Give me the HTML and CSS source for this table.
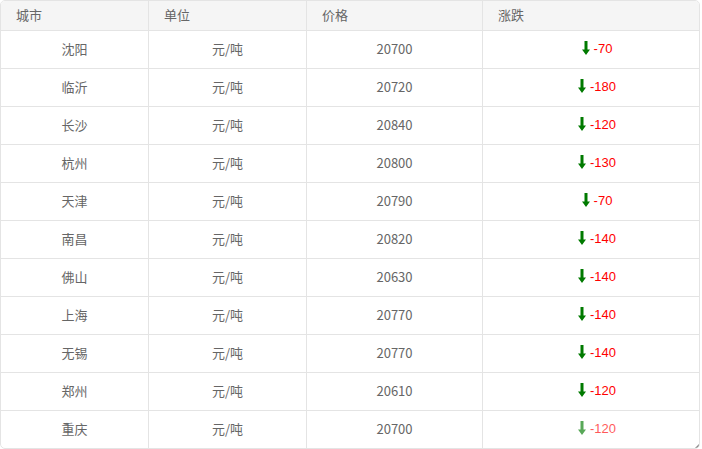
FILE: index.html
```html
<!DOCTYPE html>
<html lang="zh-CN">
<head>
<meta charset="utf-8">
<title>价格表</title>
<link rel="stylesheet" href="styles.css">
</head>
<body>
<div class="table">
  <div class="row head">
    <div class="cell">城市</div>
    <div class="cell">单位</div>
    <div class="cell">价格</div>
    <div class="cell">涨跌</div>
  </div>
  <div class="row"><div class="cell">沈阳</div><div class="cell">元/吨</div><div class="cell">20700</div><div class="cell chgcell"><span class="chg"><svg class="arrow" viewBox="0 0 8 14"><path d="M2.5 0h3v8.5h2.5l-4 5.5-4-5.5h2.5z"/></svg><span class="num">-70</span></span></div></div>
  <div class="row"><div class="cell">临沂</div><div class="cell">元/吨</div><div class="cell">20720</div><div class="cell chgcell"><span class="chg"><svg class="arrow" viewBox="0 0 8 14"><path d="M2.5 0h3v8.5h2.5l-4 5.5-4-5.5h2.5z"/></svg><span class="num">-180</span></span></div></div>
  <div class="row"><div class="cell">长沙</div><div class="cell">元/吨</div><div class="cell">20840</div><div class="cell chgcell"><span class="chg"><svg class="arrow" viewBox="0 0 8 14"><path d="M2.5 0h3v8.5h2.5l-4 5.5-4-5.5h2.5z"/></svg><span class="num">-120</span></span></div></div>
  <div class="row"><div class="cell">杭州</div><div class="cell">元/吨</div><div class="cell">20800</div><div class="cell chgcell"><span class="chg"><svg class="arrow" viewBox="0 0 8 14"><path d="M2.5 0h3v8.5h2.5l-4 5.5-4-5.5h2.5z"/></svg><span class="num">-130</span></span></div></div>
  <div class="row"><div class="cell">天津</div><div class="cell">元/吨</div><div class="cell">20790</div><div class="cell chgcell"><span class="chg"><svg class="arrow" viewBox="0 0 8 14"><path d="M2.5 0h3v8.5h2.5l-4 5.5-4-5.5h2.5z"/></svg><span class="num">-70</span></span></div></div>
  <div class="row"><div class="cell">南昌</div><div class="cell">元/吨</div><div class="cell">20820</div><div class="cell chgcell"><span class="chg"><svg class="arrow" viewBox="0 0 8 14"><path d="M2.5 0h3v8.5h2.5l-4 5.5-4-5.5h2.5z"/></svg><span class="num">-140</span></span></div></div>
  <div class="row"><div class="cell">佛山</div><div class="cell">元/吨</div><div class="cell">20630</div><div class="cell chgcell"><span class="chg"><svg class="arrow" viewBox="0 0 8 14"><path d="M2.5 0h3v8.5h2.5l-4 5.5-4-5.5h2.5z"/></svg><span class="num">-140</span></span></div></div>
  <div class="row"><div class="cell">上海</div><div class="cell">元/吨</div><div class="cell">20770</div><div class="cell chgcell"><span class="chg"><svg class="arrow" viewBox="0 0 8 14"><path d="M2.5 0h3v8.5h2.5l-4 5.5-4-5.5h2.5z"/></svg><span class="num">-140</span></span></div></div>
  <div class="row"><div class="cell">无锡</div><div class="cell">元/吨</div><div class="cell">20770</div><div class="cell chgcell"><span class="chg"><svg class="arrow" viewBox="0 0 8 14"><path d="M2.5 0h3v8.5h2.5l-4 5.5-4-5.5h2.5z"/></svg><span class="num">-140</span></span></div></div>
  <div class="row"><div class="cell">郑州</div><div class="cell">元/吨</div><div class="cell">20610</div><div class="cell chgcell"><span class="chg"><svg class="arrow" viewBox="0 0 8 14"><path d="M2.5 0h3v8.5h2.5l-4 5.5-4-5.5h2.5z"/></svg><span class="num">-120</span></span></div></div>
  <div class="row last"><div class="cell">重庆</div><div class="cell">元/吨</div><div class="cell">20700</div><div class="cell chgcell"><span class="chg fading"><svg class="arrow" viewBox="0 0 8 14"><path d="M2.5 0h3v8.5h2.5l-4 5.5-4-5.5h2.5z"/></svg><span class="num">-120</span></span></div></div>
</div>
</body>
</html>
```
FILE: styles.css
```css
html, body {
  margin: 0;
  padding: 0;
  background: #fff;
}
.table {
  position: relative;
  width: 700px;
  box-sizing: border-box;
  border: 1px solid #e4e4e4;
  border-radius: 5px;
  overflow: hidden;
  font-family: "Noto Sans CJK SC", "Noto Sans", sans-serif;
  font-size: 13px;
  color: #666;
}
.table::after {
  content: "";
  position: absolute;
  right: 0;
  bottom: 0;
  width: 0;
  height: 0;
  border-left: 4px solid transparent;
  border-bottom: 4px solid #8a8a8a;
}
.row {
  display: grid;
  grid-template-columns: 148px 158px 176px 216px;
  height: 38px;
  box-sizing: border-box;
  border-bottom: 1px solid #e4e4e4;
}
.row.last {
  height: 37px;
  border-bottom: none;
}
.row.head {
  height: 30px;
  background: #f5f5f5;
}
.cell {
  display: flex;
  align-items: center;
  justify-content: center;
  border-right: 1px solid #e4e4e4;
  line-height: 1;
  padding-bottom: 2px;
}
.cell:last-child {
  border-right: none;
}
.head .cell {
  justify-content: flex-start;
  padding-left: 15px;
}
.chgcell {
  padding-left: 12px;
  padding-bottom: 3px;
}
.chg {
  display: inline-flex;
  align-items: center;
  gap: 4px;
}
.arrow {
  width: 8px;
  height: 14px;
  fill: #007a00;
}
.num {
  font-family: "Liberation Sans", Arial, sans-serif;
  font-size: 13px;
  color: #ff0000;
}
.fading {
  opacity: 0.65;
}
```
